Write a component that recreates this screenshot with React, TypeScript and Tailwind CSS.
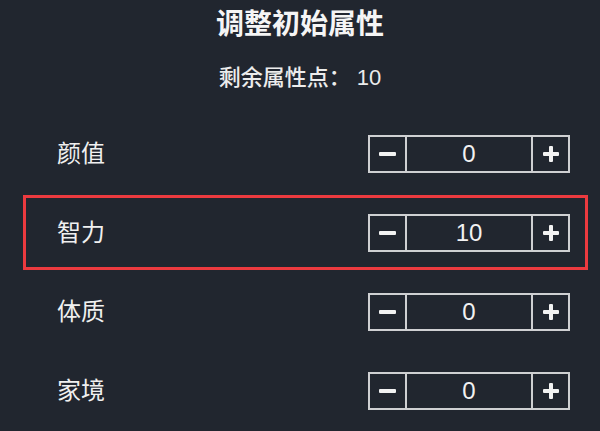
import React, { useState } from "react";

type Attr = {
  key: string;
  label: string;
  value: number;
};

const initialAttrs: Attr[] = [
  { key: "charm", label: "颜值", value: 0 },
  { key: "intelligence", label: "智力", value: 10 },
  { key: "strength", label: "体质", value: 0 },
  { key: "money", label: "家境", value: 0 },
];

const font = "font-['Liberation_Sans','Noto_Sans_CJK_SC',sans-serif]";

const Stepper = ({ value }: { value: number }) => {
  return (
    <div className="flex h-[38px] w-[202px] border-2 border-[#cfd0d2]">
      <button className="flex w-[35px] items-center justify-center">
        <span className="block h-[4px] w-[17px] rounded-[1px] bg-[#f2f2f2]" />
      </button>
      <div className="flex flex-1 items-center justify-center border-x-2 border-[#cfd0d2] text-[24px] leading-none text-[#f2f2f2]">
        {value}
      </div>
      <button className="flex w-[35px] items-center justify-center">
        <svg width="16" height="16" viewBox="0 0 16 16">
          <rect x="0" y="6" width="16" height="4" rx="1" fill="#f2f2f2" />
          <rect x="6" y="0" width="4" height="16" rx="1" fill="#f2f2f2" />
        </svg>
      </button>
    </div>
  );
};

const App = () => {
  const [attrs] = useState(initialAttrs);
  const selected = "intelligence";

  return (
    <div className={`h-[431px] w-[600px] bg-[#21262f] ${font}`}>
      <div className="flex flex-col items-center pt-[7px]">
        <h1 className="text-[28px] leading-[36px] font-semibold text-[#f5f5f5]">
          调整初始属性
        </h1>
        <p className="mt-[20px] text-[22px] leading-[30px] font-medium text-[#ececec]">
          剩余属性点： 10
        </p>
      </div>
      <div className="mt-[23px] flex flex-col gap-[4px] pr-[12px] pl-[23px]">
        {attrs.map((a) => (
          <div
            key={a.key}
            className={`flex h-[75px] items-center justify-between border-[3px] pr-[15px] pl-[31px] ${
              a.key === selected ? "border-[#ec3a3f]" : "border-transparent"
            }`}
          >
            <span className="text-[24px] leading-none text-[#f0f0f0]">
              {a.label}
            </span>
            <Stepper value={a.value} />
          </div>
        ))}
      </div>
    </div>
  );
};

export default App;
